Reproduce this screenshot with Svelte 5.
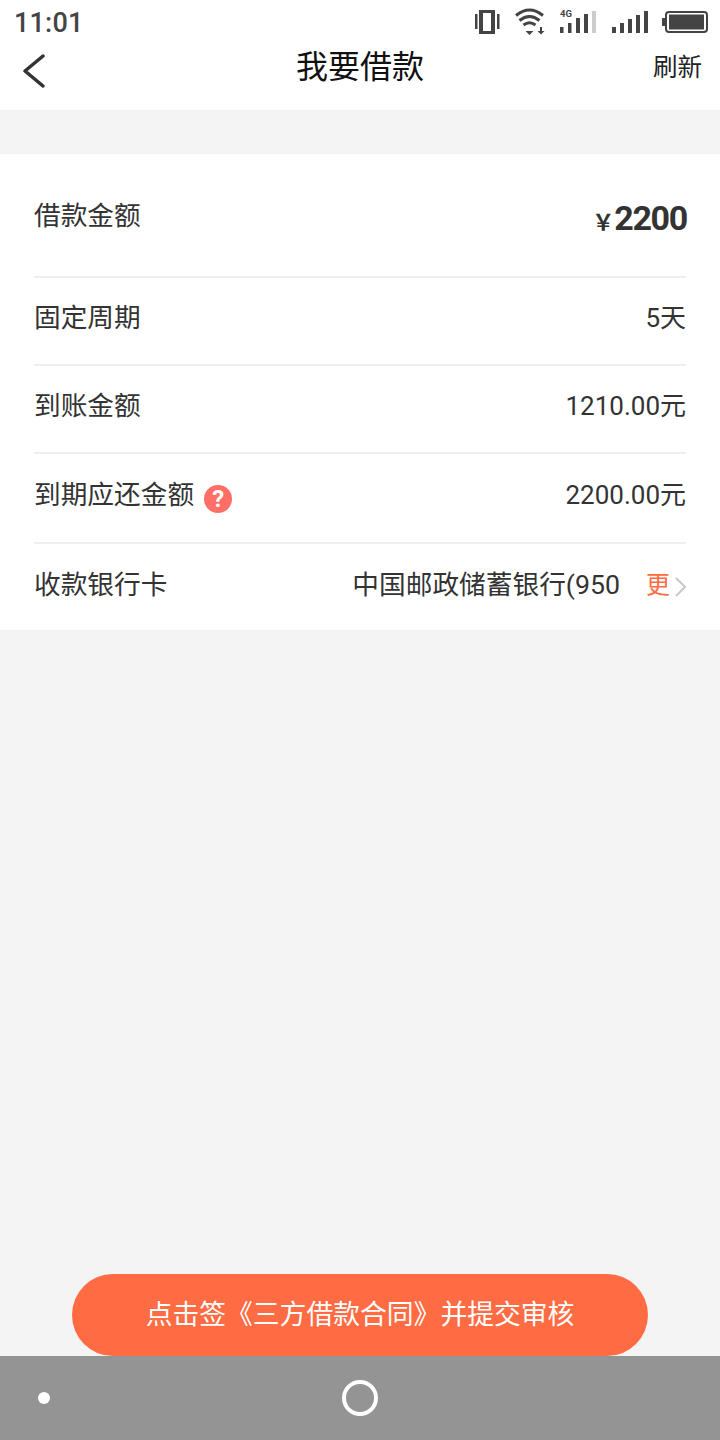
<script>
	const rows = [
		{ label: '固定周期', value: '5天' },
		{ label: '到账金额', value: '1210.00元' }
	];
</script>

<div class="page">
	<header class="top">
		<div class="status">
			<span class="time">11:01</span>
			<!-- viewBox keeps the icons in status bar coordinates -->
			<svg class="status-icons" width="240" height="40" viewBox="470 0 240 40" fill="#444">
				<!-- vibrate -->
				<rect x="475" y="14" width="2.500" height="15" />
				<path fill-rule="evenodd" d="M479 10h16v24h-16zM483 13v18h8v-18z" />
				<rect x="497" y="14" width="2.500" height="15" />
				<!-- wifi -->
				<path d="M516 15.500 Q529.500 4.500 543 15.500" fill="none" stroke="#444" stroke-width="3" />
				<path d="M519.500 20.500 Q529.500 12.500 539.500 20.500" fill="none" stroke="#444" stroke-width="3" />
				<path d="M523.500 25 Q529.500 20.500 535.500 25" fill="none" stroke="#444" stroke-width="3" />
				<path d="M525.500 31h8l-4 4z" />
				<rect x="540" y="27" width="2" height="5" />
				<path d="M537.500 31h7l-3.500 3.500z" />
				<!-- 4G signal -->
				<text x="560" y="17" class="net">4G</text>
				<rect x="560" y="27" width="3.500" height="6" />
				<rect x="568" y="23" width="3.500" height="10" />
				<rect x="576" y="18" width="4" height="15" />
				<rect x="584" y="14" width="4" height="19" />
				<rect x="592" y="11" width="4" height="22" fill="#ccc" />
				<!-- second signal -->
				<rect x="612" y="27" width="4" height="6" />
				<rect x="620" y="23" width="4" height="10" />
				<rect x="628" y="19" width="4" height="14" />
				<rect x="636" y="15" width="4" height="18" />
				<rect x="644" y="11" width="4" height="22" />
				<!-- battery -->
				<rect x="662" y="18" width="3" height="8" />
				<rect x="666" y="12" width="41" height="20" rx="3" fill="none" stroke="#444" stroke-width="2" />
				<rect x="669" y="14.500" width="35" height="15" />
			</svg>
		</div>
		<div class="title-bar">
			<svg class="back" width="24" height="34" viewBox="0 0 24 34">
				<path d="M21 2 L3 17 L21 32" fill="none" stroke="#333" stroke-width="3.500" stroke-linecap="round" stroke-linejoin="round" />
			</svg>
			<h1>我要借款</h1>
			<span class="refresh">刷新</span>
		</div>
	</header>

	<section class="card">
		<div class="row first">
			<span class="label">借款金额</span>
			<span class="amount"><small>￥</small>2200</span>
		</div>
		{#each rows as row}
			<div class="row">
				<span class="label">{row.label}</span>
				<span>{row.value}</span>
			</div>
		{/each}
		<div class="row due">
			<span class="label with-help">到期应还金额<i class="help">?</i></span>
			<span>2200.00元</span>
		</div>
		<div class="row bank">
			<span class="label">收款银行卡</span>
			<span class="bank-value">
				<span class="label">中国邮政储蓄银行(950</span>
				<span class="more">更</span>
				<svg width="12" height="20" viewBox="0 0 12 20">
					<path d="M2 1 L11 10 L2 19" fill="none" stroke="#c8c8c8" stroke-width="2" />
				</svg>
			</span>
		</div>
	</section>

	<div class="spacer"></div>

	<button class="submit"><span>点击签《三方借款合同》并提交审核</span></button>

	<nav class="nav">
		<span class="dot"></span>
		<span class="home"></span>
	</nav>
</div>

<style>
	:global(body) {
		background: #f4f4f4;
	}

	.page {
		display: flex;
		flex-direction: column;
		height: 1440px;
		background: #f4f4f4;
		font-family: "Roboto", "Noto Sans CJK SC", sans-serif;
		color: #333;
	}

	.top {
		height: 110px;
		background: #fff;
	}

	.status {
		display: flex;
		justify-content: space-between;
		height: 44px;
		padding: 0 10px 0 14px;
	}

	.time {
		font-size: 27px;
		font-weight: 500;
		line-height: 46px;
		color: #444;
		letter-spacing: 0.2px;
	}

	.status-icons {
		flex: none;
	}

	.net {
		font-size: 9.500px;
		font-weight: 700;
		font-family: "Roboto", sans-serif;
	}

	.title-bar {
		display: grid;
		grid-template-columns: 1fr auto 1fr;
		align-items: center;
		height: 46px;
		padding: 0 18px;
	}

	.back {
		margin: 5px 0 0 4px;
	}

	h1 {
		margin: 0 0 2px;
		font-size: 32px;
		font-weight: 400;
		color: #111;
		line-height: 44px;
	}

	.refresh {
		justify-self: end;
		font-size: 24.500px;
		color: #222;
		line-height: 48px;
	}

	.card {
		margin-top: 44px;
		height: 476px;
		background: #fff;
		padding: 0 34px;
		display: flex;
		flex-direction: column;
	}

	.row {
		display: flex;
		align-items: center;
		justify-content: space-between;
		height: 88px;
		padding-bottom: 12px;
		border-bottom: 2px solid #eee;
		box-sizing: border-box;
		font-size: 26px;
		color: #333;
	}

	.label {
		font-size: 26.700px;
	}

	.row.first {
		height: 124px;
		padding-bottom: 3px;
	}

	.row.due {
		height: 90px;
	}

	.row.bank {
		height: 86px;
		padding-bottom: 10px;
		border-bottom: 0;
	}

	.amount {
		display: flex;
		align-items: baseline;
		margin: 8px -1px 0 0;
		font-size: 34px;
		font-weight: 700;
		letter-spacing: -1.300px;
	}

	.amount small {
		font-size: 22px;
		font-weight: 700;
		letter-spacing: 0;
	}

	.with-help {
		display: flex;
		align-items: center;
	}

	.help {
		width: 28px;
		height: 28px;
		margin: 14px 0 0 10px;
		border-radius: 50%;
		background: #ff6f66;
		color: #fff;
		font-size: 24px;
		font-weight: 700;
		font-style: normal;
		line-height: 28px;
		text-align: center;
	}

	.bank-value {
		display: flex;
		align-items: center;
	}

	.more {
		margin-left: 26px;
		color: #ff6b42;
		font-size: 24px;
	}

	.bank-value svg {
		margin: 10px 0 0 4px;
	}

	.spacer {
		flex: 1;
	}

	.submit {
		display: block;
		width: 576px;
		height: 82px;
		margin: 0 auto;
		padding: 0 0 6px;
		border: 0;
		border-radius: 41px;
		background: #ff6b42;
		color: #fff;
		font-family: inherit;
		font-size: 26.800px;
	}

	.nav {
		display: flex;
		align-items: center;
		justify-content: center;
		height: 84px;
		background: #949494;
		position: relative;
	}

	.dot {
		position: absolute;
		left: 38px;
		top: 36px;
		width: 12px;
		height: 12px;
		border-radius: 50%;
		background: #fff;
	}

	.home {
		width: 28px;
		height: 28px;
		border: 4px solid #fff;
		border-radius: 50%;
	}
</style>
